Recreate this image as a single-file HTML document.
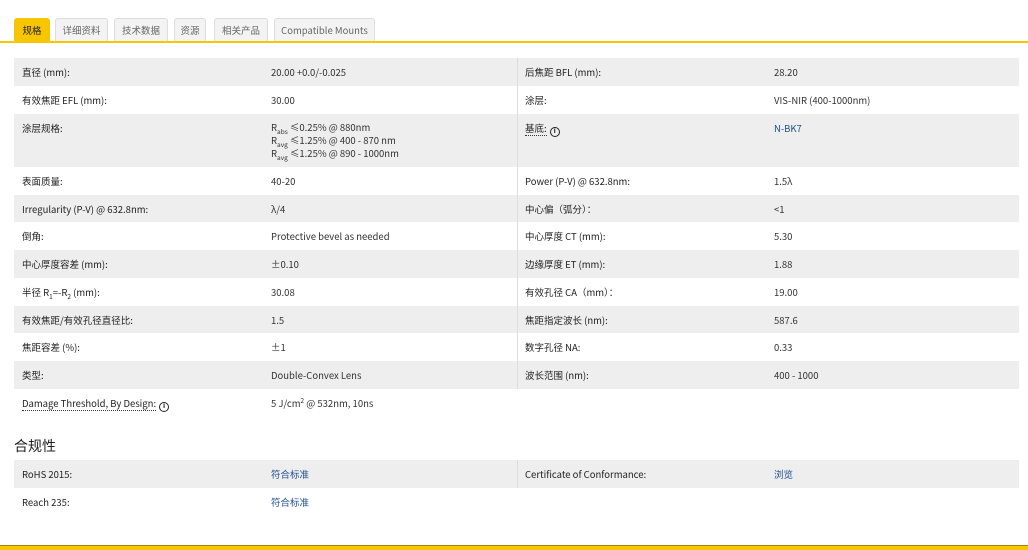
<!DOCTYPE html>
<html><head><meta charset="utf-8"><style>
*{margin:0;padding:0;box-sizing:border-box}
body{width:1028px;height:550px;background:#fff;font-family:"Noto Sans CJK SC","Liberation Sans",sans-serif;font-size:9.5px;color:#333;position:relative;overflow:hidden}
.tab{position:absolute;top:18px;height:23px;border:1px solid #ddd;border-bottom:none;background:#f3f3f3;border-radius:3px 3px 0 0;color:#666;font-size:9.5px;line-height:23px;text-align:center}
.tab.a{background:#f7c600;border-color:#f7c600;color:#222}
.line{position:absolute;left:0;top:41px;width:1028px;height:2px;background:#f7c600}
.r{position:absolute;left:14px;width:1005px}
.g{background:#eeeeee}
.c{position:absolute;top:7px;white-space:nowrap;line-height:14px}
.c1{left:8px;color:#222}.c2{left:257px}.c3{left:511px;color:#222}.c4{left:760px}
.div{position:absolute;left:503px;top:0;bottom:0;width:1px;background:#ddd}
a{color:#1f4e8f;text-decoration:none}
.info{display:inline-block;margin-left:3px;width:10px;height:10px;border:1.5px solid #222;border-radius:50%;font-size:7px;line-height:7px;text-align:center;font-weight:bold;vertical-align:-1px}
.u{border-bottom:1px dotted #333}
sub,sup{font-size:6.5px;line-height:0}
h3{position:absolute;left:14px;top:436px;font-size:14px;font-weight:normal;color:#222;line-height:20px}
.bot{position:absolute;left:0;top:545px;width:1028px;height:5px;background:#f7c600;border-top:1px solid #a58400}
</style></head><body>
<div class="tab a" style="left:14px;width:36px">规格</div>
<div class="tab" style="left:55px;width:53px">详细资料</div>
<div class="tab" style="left:114px;width:54px">技术数据</div>
<div class="tab" style="left:174px;width:32px">资源</div>
<div class="tab" style="left:214px;width:54px">相关产品</div>
<div class="tab" style="left:274px;width:101px">Compatible Mounts</div>
<div class="line"></div>

<div class="r g" style="top:58px;height:28px"><div class="div"></div><span class="c c1">直径 (mm):</span><span class="c c2">20.00 +0.0/-0.025</span><span class="c c3">后焦距 BFL (mm):</span><span class="c c4">28.20</span></div>
<div class="r" style="top:86px;height:28px"><div class="div"></div><span class="c c1">有效焦距 EFL (mm):</span><span class="c c2">30.00</span><span class="c c3">涂层:</span><span class="c c4">VIS-NIR (400-1000nm)</span></div>
<div class="r g" style="top:114px;height:53px"><div class="div"></div><span class="c c1">涂层规格:</span><span class="c c2" style="top:7px;line-height:13px">R<sub>abs</sub> ≤0.25% @ 880nm<br>R<sub>avg</sub> ≤1.25% @ 400 - 870 nm<br>R<sub>avg</sub> ≤1.25% @ 890 - 1000nm</span><span class="c c3"><span class="u">基底:</span><span class="info">i</span></span><span class="c c4"><a>N-BK7</a></span></div>
<div class="r" style="top:167px;height:28px"><div class="div"></div><span class="c c1">表面质量:</span><span class="c c2">40-20</span><span class="c c3">Power (P-V) @ 632.8nm:</span><span class="c c4">1.5λ</span></div>
<div class="r g" style="top:195px;height:27px"><div class="div"></div><span class="c c1">Irregularity (P-V) @ 632.8nm:</span><span class="c c2">λ/4</span><span class="c c3">中心偏（弧分）：</span><span class="c c4">&lt;1</span></div>
<div class="r" style="top:222px;height:28px"><div class="div"></div><span class="c c1">倒角:</span><span class="c c2">Protective bevel as needed</span><span class="c c3">中心厚度 CT (mm):</span><span class="c c4">5.30</span></div>
<div class="r g" style="top:250px;height:28px"><div class="div"></div><span class="c c1">中心厚度容差 (mm):</span><span class="c c2">±0.10</span><span class="c c3">边缘厚度 ET (mm):</span><span class="c c4">1.88</span></div>
<div class="r" style="top:278px;height:28px"><div class="div"></div><span class="c c1">半径 R<sub>1</sub>=-R<sub>2</sub> (mm):</span><span class="c c2">30.08</span><span class="c c3">有效孔径 CA（mm）：</span><span class="c c4">19.00</span></div>
<div class="r g" style="top:306px;height:27px"><div class="div"></div><span class="c c1">有效焦距/有效孔径直径比:</span><span class="c c2">1.5</span><span class="c c3">焦距指定波长 (nm):</span><span class="c c4">587.6</span></div>
<div class="r" style="top:333px;height:28px"><div class="div"></div><span class="c c1">焦距容差 (%):</span><span class="c c2">±1</span><span class="c c3">数字孔径 NA:</span><span class="c c4">0.33</span></div>
<div class="r g" style="top:361px;height:28px"><div class="div"></div><span class="c c1">类型:</span><span class="c c2">Double-Convex Lens</span><span class="c c3">波长范围 (nm):</span><span class="c c4">400 - 1000</span></div>
<div class="r" style="top:389px;height:28px"><span class="c c1"><span class="u">Damage Threshold, By Design:</span><span class="info">i</span></span><span class="c c2">5 J/cm<sup>2</sup> @ 532nm, 10ns</span></div>

<h3>合规性</h3>
<div class="r g" style="top:460px;height:28px"><div class="div"></div><span class="c c1">RoHS 2015:</span><span class="c c2"><a>符合标准</a></span><span class="c c3">Certificate of Conformance:</span><span class="c c4"><a>浏览</a></span></div>
<div class="r" style="top:488px;height:28px"><span class="c c1">Reach 235:</span><span class="c c2"><a>符合标准</a></span></div>
<div class="bot"></div>
</body></html>
